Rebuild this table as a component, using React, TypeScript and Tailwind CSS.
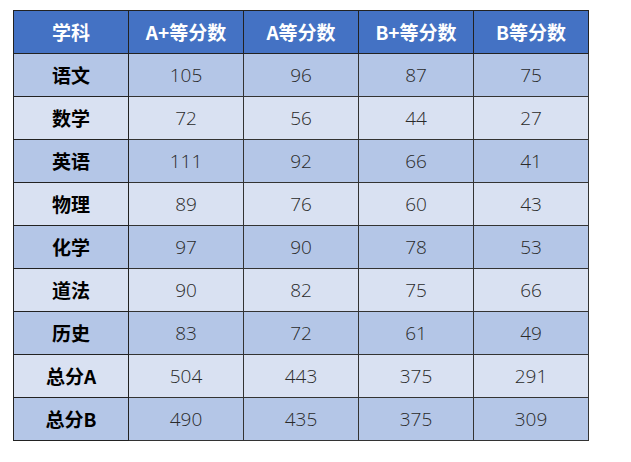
import React from "react";

const headers = ["学科", "A+等分数", "A等分数", "B+等分数", "B等分数"];
const rows: [string, number[]][] = [
  ["语文", [105, 96, 87, 75]],
  ["数学", [72, 56, 44, 27]],
  ["英语", [111, 92, 66, 41]],
  ["物理", [89, 76, 60, 43]],
  ["化学", [97, 90, 78, 53]],
  ["道法", [90, 82, 75, 66]],
  ["历史", [83, 72, 61, 49]],
  ["总分A", [504, 443, 375, 291]],
  ["总分B", [490, 435, 375, 309]],
];

export default function App() {
  return (
    <div className="w-[631px] h-[462px] bg-white pt-[10px] pl-[13px]">
      <table className="border-collapse w-[576px] table-fixed">
        <thead>
          <tr className="h-[43px] bg-[#4472C4]">
            {headers.map((h) => (
              <th
                key={h}
                className="border border-[#222] text-white font-bold text-[19px] text-center p-0"
                style={{ fontFamily: '"Noto Sans CJK SC", sans-serif' }}
              >
                {h}
              </th>
            ))}
          </tr>
        </thead>
        <tbody>
          {rows.map(([name, vals], i) => (
            <tr
              key={name}
              className={`h-[43px] ${i % 2 === 0 ? "bg-[#B4C6E7]" : "bg-[#D9E1F2]"}`}
            >
              <td
                className="border border-[#222] text-black font-bold text-[19px] text-center p-0"
                style={{ fontFamily: '"Noto Sans CJK SC", sans-serif' }}
              >
                {name}
              </td>
              {vals.map((v, j) => (
                <td
                  key={j}
                  className="border border-[#333] text-[#2a2a2a] font-light text-[19px] text-center p-0"
                  style={{ fontFamily: '"Open Sans", sans-serif' }}
                >
                  {v}
                </td>
              ))}
            </tr>
          ))}
        </tbody>
      </table>
    </div>
  );
}
